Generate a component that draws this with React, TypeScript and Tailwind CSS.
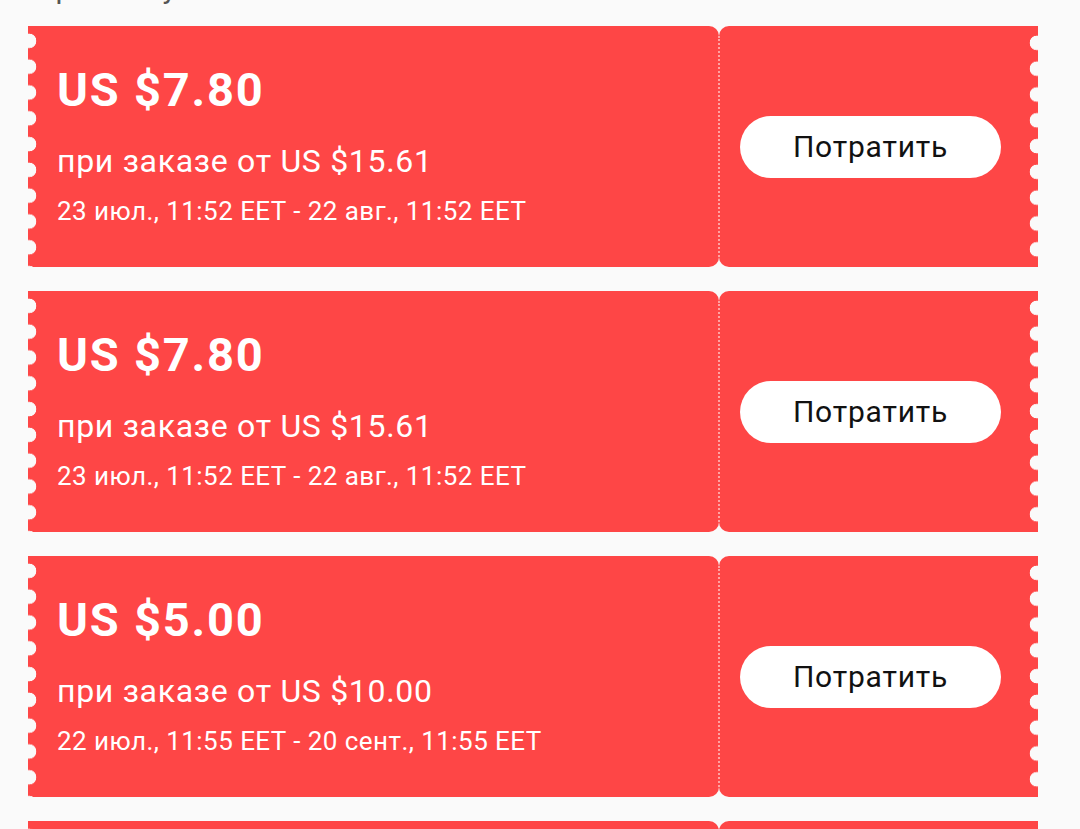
import React from "react"

type Coupon = {
  amount: string
  minOrder: string
  period: string
}

const coupons: Coupon[] = [
  { amount: "US $7.80", minOrder: "при заказе от US $15.61", period: "23 июл., 11:52 EET - 22 авг., 11:52 EET" },
  { amount: "US $7.80", minOrder: "при заказе от US $15.61", period: "23 июл., 11:52 EET - 22 авг., 11:52 EET" },
  { amount: "US $5.00", minOrder: "при заказе от US $10.00", period: "22 июл., 11:55 EET - 20 сент., 11:55 EET" },
]

function CouponCard({ coupon }: { coupon?: Coupon }) {
  return (
    <div className="flex h-[241px] shrink-0">
      {/* левая часть с зубчиками */}
      <div className="flex w-[691px] flex-col rounded-r-[10px] bg-[#fe4646] bg-[radial-gradient(circle_at_1px_50%,#fafafa_7px,transparent_7.6px)] bg-[length:16px_25.8px] bg-[position:0_2px] bg-repeat-y pl-[29px] pt-[36px] text-white">
        {coupon && (
          <>
            <p className="text-[47px] font-bold leading-[56px] tracking-[1.8px]">{coupon.amount}</p>
            <p className="mt-[21px] text-[32px] leading-[44px] tracking-[0.7px]">{coupon.minOrder}</p>
            <p className="mt-[10px] text-[26px] leading-[36px] tracking-[0.45px]">{coupon.period}</p>
          </>
        )}
      </div>

      {/* правая часть с кнопкой */}
      <div className="flex w-[319px] rounded-l-[10px] bg-[#fe4646] bg-[radial-gradient(circle_at_calc(100%-1px)_50%,#fafafa_7px,transparent_7.6px)] bg-[length:16px_25.8px] bg-[position:right_4px] bg-repeat-y">
        <div className="my-[10px] -ml-px border-l-2 border-dotted border-[#ffa3a3]" />
        <div className="flex flex-1 items-center pl-[20px]">
          {coupon && (
            <button className="flex h-[62px] w-[261px] items-center justify-center rounded-full bg-white text-[30px] leading-none tracking-[0.8px] text-[#111]">
              Потратить
            </button>
          )}
        </div>
      </div>
    </div>
  )
}

export default function App() {
  return (
    <div className="h-[829px] overflow-hidden bg-[#fafafa] font-['Roboto','Noto_Sans',sans-serif]">
      {/* заголовок, прокрученный почти за край */}
      <div className="h-[26px] overflow-hidden pl-[34px]">
        <p className="-mt-[27px] text-[30px] leading-[30px] text-[#555]">Прочие купоны</p>
      </div>
      <div className="ml-[28px] flex w-[1010px] flex-col gap-[24px]">
        {coupons.map((c, i) => (
          <CouponCard key={i} coupon={c} />
        ))}
        <CouponCard />
      </div>
    </div>
  )
}
